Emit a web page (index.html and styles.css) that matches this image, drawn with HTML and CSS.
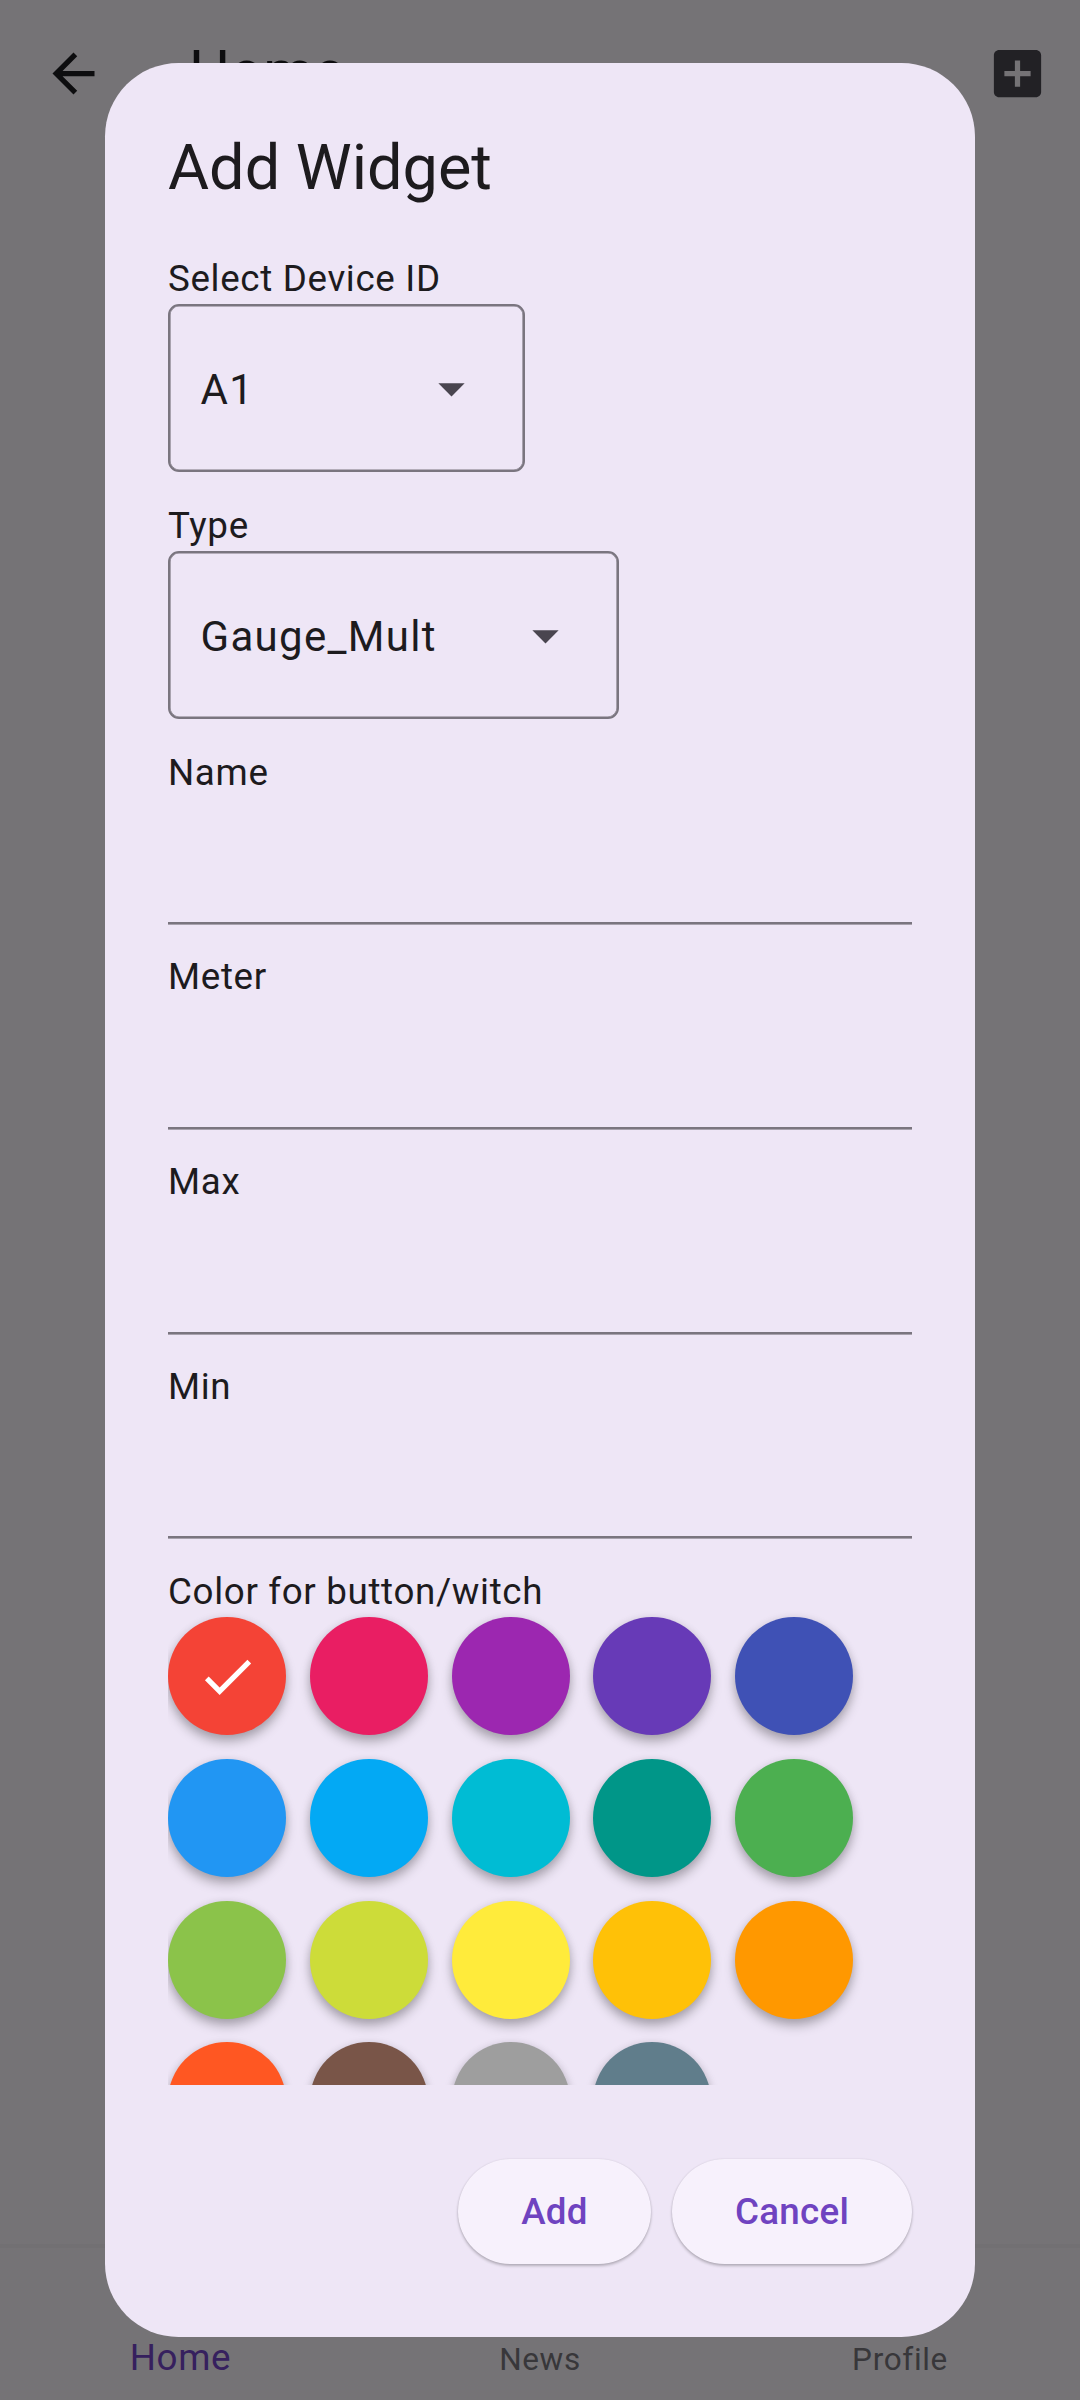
FILE: index.html
```html
<!DOCTYPE html>
<html lang="en">
<head>
<meta charset="utf-8">
<title>Add Widget</title>
<link rel="stylesheet" href="styles.css">
</head>
<body>
<div class="app">
  <header class="app-bar">
    <svg class="icon" viewBox="0 0 24 24"><path d="M20 11H7.83l5.59-5.59L12 4l-8 8 8 8 1.41-1.41L7.83 13H20v-2z"/></svg>
    <h1 class="app-title">Home</h1>
    <svg class="icon icon-add" viewBox="0 0 24 24"><path d="M19 3H5c-1.1 0-2 .9-2 2v14c0 1.1.9 2 2 2h14c1.1 0 2-.9 2-2V5c0-1.1-.9-2-2-2zm-2 10h-4v4h-2v-4H7v-2h4V7h2v4h4v2z"/></svg>
  </header>
  <main class="app-body"></main>
  <nav class="nav">
    <a class="nav-item nav-item-active">Home</a>
    <a class="nav-item">News</a>
    <a class="nav-item">Profile</a>
  </nav>
</div>

<section class="dialog" role="dialog">
  <h2 class="dialog-title">Add Widget</h2>
  <div class="dialog-content">
    <div class="field">
      <label class="label">Select Device ID</label>
      <div class="dropdown dropdown-device"><span>A1</span>
        <svg class="icon caret" viewBox="0 0 24 24"><path d="M7 10l5 5 5-5z"/></svg></div>
    </div>
    <div class="field">
      <label class="label">Type</label>
      <div class="dropdown dropdown-type"><span>Gauge_Mult</span>
        <svg class="icon caret" viewBox="0 0 24 24"><path d="M7 10l5 5 5-5z"/></svg></div>
    </div>
    <div class="field"><label class="label">Name</label><div class="input"></div></div>
    <div class="field"><label class="label">Meter</label><div class="input"></div></div>
    <div class="field"><label class="label">Max</label><div class="input"></div></div>
    <div class="field"><label class="label">Min</label><div class="input"></div></div>
    <label class="label">Color for button/witch</label>
    <div class="swatches">
      <div class="swatch red"><svg class="icon check" viewBox="0 0 24 24"><path d="M9 16.17L4.83 12l-1.42 1.41L9 19 21 7l-1.41-1.41z"/></svg></div>
      <div class="swatch pink"></div>
      <div class="swatch purple"></div>
      <div class="swatch deep-purple"></div>
      <div class="swatch indigo"></div>
      <div class="swatch blue"></div>
      <div class="swatch light-blue"></div>
      <div class="swatch cyan"></div>
      <div class="swatch teal"></div>
      <div class="swatch green"></div>
      <div class="swatch light-green"></div>
      <div class="swatch lime"></div>
      <div class="swatch yellow"></div>
      <div class="swatch amber"></div>
      <div class="swatch orange"></div>
      <div class="swatch deep-orange"></div>
      <div class="swatch brown"></div>
      <div class="swatch grey"></div>
      <div class="swatch blue-grey"></div>
    </div>
  </div>
  <div class="actions">
    <button class="button button-add">Add</button>
    <button class="button button-cancel">Cancel</button>
  </div>
</section>
</body>
</html>
```
FILE: styles.css
```css
* { box-sizing: border-box; }

body {
  margin: 0;
  width: 1080px;
  height: 2400px;
  overflow: hidden;
  position: relative;
  font-family: Roboto, "Liberation Sans", sans-serif;
  color: #1d1b1e;
  background: #757376;
}

h1, h2 { margin: 0; font-weight: 400; }

.icon { display: block; width: 63px; height: 63px; flex: none; fill: currentColor; }

/* Page behind the dialog, already dimmed by the modal barrier */
.app { height: 2400px; display: flex; flex-direction: column; }
.app-bar {
  height: 147px;
  padding: 0 31px 0 42px;
  display: flex;
  align-items: center;
  color: #0d0d0f;
}
.app-title { flex: 1; margin-left: 84px; padding-bottom: 3px; font-size: 57.75px; line-height: 73.5px; }
.icon-add { color: #222125; }
.app-body { flex: 1; border-bottom: 4px solid #727073; }
.nav {
  height: 152px;
  padding-bottom: 19px;
  display: grid;
  grid-template-columns: repeat(3, 1fr);
  align-items: baseline;
  align-content: end;
  text-align: center;
}
.nav-item { font-size: 31.5px; line-height: 42px; letter-spacing: 0.656px; color: #38373a; }
.nav-item-active { font-size: 36.75px; color: #36205e; padding-left: 1px; }

.dialog {
  position: absolute;
  left: 105px;
  top: 63px;
  width: 870px;
  height: 2274px;
  padding: 63px 63px 73.5px;
  border-radius: 73.5px;
  background: #eee6f6;
  display: flex;
  flex-direction: column;
}
.dialog-title { font-size: 63px; line-height: 84px; margin-bottom: 42px; }
.dialog-content { height: 1833px; overflow: hidden; }

.field { padding-bottom: 26.25px; }
.label {
  display: block;
  height: 52.5px;
  font-size: 36.75px;
  line-height: 54.5px;
  letter-spacing: 0.656px;
}
.dropdown {
  height: 168px;
  padding: 0 40px 0 30.5px;
  border: 2px solid #7a757f;
  box-shadow: inset 0 0 0 0.6px #7a757f;
  border-radius: 11px;
  display: flex;
  align-items: center;
  justify-content: space-between;
  font-size: 42px;
  line-height: 63px;
  letter-spacing: 1.3125px;
}
.dropdown span { padding-top: 2px; }
.dropdown-device { width: 357px; margin-top: -0.5px; margin-bottom: 0.5px; }
.dropdown-type { width: 451px; }
.caret { color: #49454f; }
.input { height: 126px; border-bottom: 2px solid #7a757f; box-shadow: 0 0.6px 0 #7a757f; }

.swatches {
  display: grid;
  grid-template-columns: repeat(5, 118.125px);
  grid-auto-rows: 118.125px;
  gap: 23.625px;
}
.swatch {
  border-radius: 50%;
  display: grid;
  place-items: center;
  box-shadow: 0 7px 11px rgba(0, 0, 0, 0.26), 0 1px 8px rgba(0, 0, 0, 0.1);
}
.check { color: #fff; }
.red { background: #f44336; }
.pink { background: #e91e63; }
.purple { background: #9c27b0; }
.deep-purple { background: #673ab7; }
.indigo { background: #3f51b5; }
.blue { background: #2196f3; }
.light-blue { background: #03a9f4; }
.cyan { background: #00bcd4; }
.teal { background: #009688; }
.green { background: #4caf50; }
.light-green { background: #8bc34a; }
.lime { background: #cddc39; }
.yellow { background: #ffeb3b; }
.amber { background: #ffc107; }
.orange { background: #ff9800; }
.deep-orange { background: #ff5722; }
.brown { background: #795548; }
.grey { background: #9e9e9e; }
.blue-grey { background: #607d8b; }

.actions { margin-top: auto; display: flex; justify-content: flex-end; gap: 21px; }
.button {
  height: 105px;
  padding: 2px 0 0;
  border: 0;
  border-radius: 52.5px;
  background: #f7f1fc;
  color: #6f43c0;
  font: 500 36.75px/52.5px Roboto, "Liberation Sans", sans-serif;
  letter-spacing: 0.2625px;
  box-shadow: 0 2px 3px rgba(0, 0, 0, 0.24), 0 0 2px rgba(0, 0, 0, 0.1);
}
.button-add { width: 193px; }
.button-cancel { width: 240px; }
```
